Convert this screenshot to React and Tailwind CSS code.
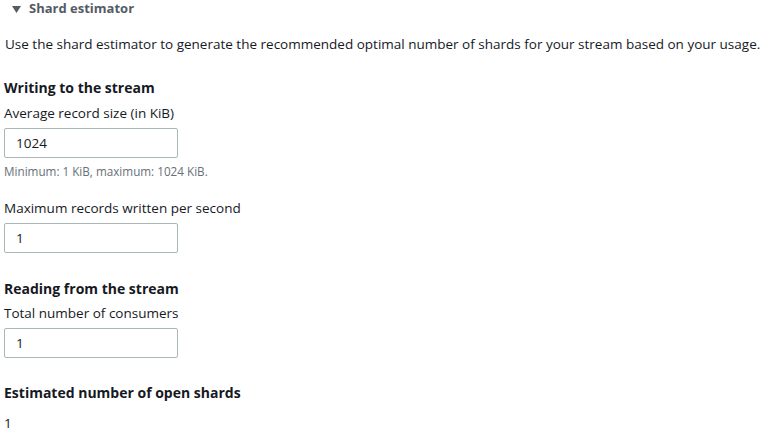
import { useState } from 'react'

function Field({ label, value, onChange, hint }) {
  return (
    <div>
      <div className="h-[21px] leading-[21px] text-[13.5px] text-[#16191f]">{label}</div>
      <input
        value={value}
        onChange={(e) => onChange(e.target.value)}
        className="mt-[4px] block w-[174px] h-[30px] px-[11px] text-[13.5px] text-[#16191f] border border-[#aab7b8] rounded-[2px] outline-none bg-white"
      />
      {hint && <div className="mt-[4px] h-[18px] leading-[18px] text-[11.7px] text-[#687078]">{hint}</div>}
    </div>
  )
}

export default function App() {
  const [size, setSize] = useState('1024')
  const [records, setRecords] = useState('1')
  const [consumers, setConsumers] = useState('1')

  return (
    <div className="w-[762px] h-[447px] bg-white pl-[4px] font-['Open_Sans',sans-serif] text-[#16191f]">
      {/* Header */}
      <div className="flex items-center h-[17px] pl-[8px] gap-[8px]">
        <svg width="9" height="7" viewBox="0 0 9 7" className="mt-[1px]">
          <path d="M0 0 L9 0 L4.5 7 Z" fill="#545b64" />
        </svg>
        <span className="text-[13px] font-bold text-[#545b64]">Shard estimator</span>
      </div>

      <p className="mt-[17px] h-[21px] leading-[21px] text-[13.5px] pl-[1px] whitespace-nowrap">
        Use the shard estimator to generate the recommended optimal number of shards for your stream based on your usage.
      </p>

      {/* Writing */}
      <h3 className="mt-[22px] h-[22px] leading-[22px] text-[14px] font-bold">Writing to the stream</h3>
      <div className="mt-[4px]">
        <Field label="Average record size (in KiB)" value={size} onChange={setSize} hint="Minimum: 1 KiB, maximum: 1024 KiB." />
      </div>
      <div className="mt-[18px]">
        <Field label="Maximum records written per second" value={records} onChange={setRecords} />
      </div>

      {/* Reading */}
      <h3 className="mt-[25px] h-[22px] leading-[22px] text-[14px] font-bold">Reading from the stream</h3>
      <div className="mt-[3px]">
        <Field label="Total number of consumers" value={consumers} onChange={setConsumers} />
      </div>

      <h3 className="mt-[24px] h-[22px] leading-[22px] text-[14px] font-bold">Estimated number of open shards</h3>
      <div className="mt-[9px] h-[21px] leading-[21px] text-[13.5px]">1</div>
    </div>
  )
}
